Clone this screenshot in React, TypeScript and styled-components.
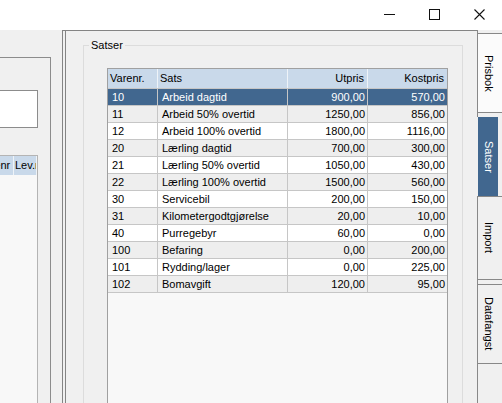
import styled, { createGlobalStyle } from 'styled-components'

const GlobalStyle = createGlobalStyle`
  html, body {
    margin: 0;
    padding: 0;
    background: #f0f0f0;
  }
`

type Rate = { nr: string; name: string; sale: string; cost: string }

const rates: Rate[] = [
  { nr: '10', name: 'Arbeid dagtid', sale: '900,00', cost: '570,00' },
  { nr: '11', name: 'Arbeid 50% overtid', sale: '1250,00', cost: '856,00' },
  { nr: '12', name: 'Arbeid 100% overtid', sale: '1800,00', cost: '1116,00' },
  { nr: '20', name: 'Lærling dagtid', sale: '700,00', cost: '300,00' },
  { nr: '21', name: 'Lærling 50% overtid', sale: '1050,00', cost: '430,00' },
  { nr: '22', name: 'Lærling 100% overtid', sale: '1500,00', cost: '560,00' },
  { nr: '30', name: 'Servicebil', sale: '200,00', cost: '150,00' },
  { nr: '31', name: 'Kilometergodtgjørelse', sale: '20,00', cost: '10,00' },
  { nr: '40', name: 'Purregebyr', sale: '60,00', cost: '0,00' },
  { nr: '100', name: 'Befaring', sale: '0,00', cost: '200,00' },
  { nr: '101', name: 'Rydding/lager', sale: '0,00', cost: '225,00' },
  { nr: '102', name: 'Bomavgift', sale: '120,00', cost: '95,00' },
]

const Window = styled.div`
  width: 502px;
  height: 403px;
  overflow: hidden;
  display: flex;
  flex-direction: column;
  background: #f0f0f0;
  font-family: 'Liberation Sans', Arial, sans-serif;
  font-size: 11px;
  color: #000;
`

const TitleBar = styled.div`
  height: 30px;
  flex-shrink: 0;
  background: #fff;
  display: flex;
  justify-content: flex-end;
`

const CaptionButton = styled.div`
  width: 45px;
  height: 30px;
  display: flex;
  justify-content: center;
  align-items: flex-start;
  padding-top: 9px;
  box-sizing: border-box;
`

const Body = styled.div`
  flex: 1;
  min-height: 0;
  display: flex;
`

/* left side: partly hidden search panel */
const LeftPane = styled.div`
  width: 62px;
  flex-shrink: 0;
  overflow: hidden;
  display: flex;
  flex-direction: column;
`

const SidePanel = styled.div`
  margin-top: 27px;
  margin-left: -30px;
  width: 81px;
  flex: 1;
  box-sizing: border-box;
  border-top: 1px solid #8c8c8c;
  border-right: 1px solid #8c8c8c;
  padding-right: 12px;
  display: flex;
  flex-direction: column;
`

const SearchBox = styled.div`
  margin-top: 32px;
  height: 38px;
  box-sizing: border-box;
  border: 1px solid #8c8c8c;
  background: #fff;
`

const SupplierGrid = styled.div`
  margin-top: 27px;
  margin-left: auto;
  width: 62px;
  flex: 1;
  box-sizing: border-box;
  border: 1px solid #b4b4b4;
  border-bottom: none;
  background: #f8f8f8;
  overflow: hidden;
`

const SupplierHeader = styled.div`
  display: grid;
  grid-template-columns: 37px 1fr;
  height: 19px;
  background: #c9d9ea;
`

const SupplierHeadCell = styled.div`
  padding-left: 1px;
  line-height: 19px;
  white-space: nowrap;
  overflow: hidden;
  border-right: 1px solid #eef3f8;
`

const Splitter = styled.div`
  width: 3px;
  flex-shrink: 0;
  box-sizing: border-box;
  border-left: 1px solid #848484;
  border-top: 1px solid #848484;
`

/* tab page with the rate group */
const TabPage = styled.div`
  width: 412px;
  flex-shrink: 0;
  box-sizing: border-box;
  border-left: 1px solid #848484;
  border-top: 1px solid #848484;
  overflow: hidden;
  display: flex;
  flex-direction: column;
`

const GroupBox = styled.div`
  margin: 14px 14px 0 17px;
  min-height: 420px;
  border: 1px solid #dcdcdc;
  padding: 0 14px 0 23px;
  display: flex;
  flex-direction: column;
`

const GroupCaption = styled.div`
  align-self: flex-start;
  margin: -7px 0 0 -18px;
  padding: 0 2px;
  line-height: 13px;
  background: #f0f0f0;
`

const RateGrid = styled.div`
  margin-top: 16px;
  width: 341px;
  min-height: 400px;
  box-sizing: border-box;
  border: 1px solid #a0a0a0;
  background: #f8f8f8;
`

const columns = '50px 130px 80px 79px'

const HeaderRow = styled.div`
  display: grid;
  grid-template-columns: ${columns};
  height: 20px;
  box-sizing: border-box;
  border-bottom: 1px solid #c6c6c6;
  background: #c9d9ea;
`

const HeadCell = styled.div<{ $right?: boolean; $last?: boolean }>`
  line-height: 19px;
  padding: ${(p) => (p.$right ? '0 3px 0 0' : '0 0 0 2px')};
  text-align: ${(p) => (p.$right ? 'right' : 'left')};
  border-right: ${(p) => (p.$last ? 'none' : '1px solid #eef3f8')};
  white-space: nowrap;
`

type Tone = 'selected' | 'shaded' | 'plain'

const rowBg: Record<Tone, string> = {
  selected: '#41678f',
  shaded: '#eeeeee',
  plain: '#ffffff',
}

const DataRow = styled.div<{ $tone: Tone }>`
  display: grid;
  grid-template-columns: ${columns};
  height: 17px;
  box-sizing: border-box;
  border-bottom: 1px solid #c6c6c6;
  background: ${(p) => rowBg[p.$tone]};
  color: ${(p) => (p.$tone === 'selected' ? '#fff' : '#000')};
`

const Cell = styled.div<{ $right?: boolean; $last?: boolean }>`
  line-height: 16px;
  padding: ${(p) => (p.$right ? '0 2px 0 0' : '0 0 0 4px')};
  text-align: ${(p) => (p.$right ? 'right' : 'left')};
  border-right: ${(p) => (p.$last ? 'none' : '1px solid #c6c6c6')};
  white-space: nowrap;
  overflow: hidden;
`

/* vertical tabs on the right edge */
const TabStrip = styled.div`
  width: 25px;
  flex-shrink: 0;
  display: flex;
  flex-direction: column;
`

const StripEdge = styled.div<{ $h?: number }>`
  border-left: 1px solid #888;
  height: ${(p) => (p.$h ? `${p.$h}px` : 'auto')};
  flex: ${(p) => (p.$h ? '0 0 auto' : '1')};
`

const SideTab = styled.div<{ $h: number; $active?: boolean; $bg?: string }>`
  height: ${(p) => p.$h}px;
  box-sizing: border-box;
  display: flex;
  align-items: center;
  justify-content: center;
  ${(p) =>
    p.$active
      ? `
    margin-left: 1px;
    width: 20px;
    background: #41678f;
    color: #fff;
  `
      : `
    border: 1px solid #888;
    border-right: none;
    padding-right: 4px;
    background: ${p.$bg ?? '#f0f0f0'};
  `}
`

const TabLabel = styled.span`
  writing-mode: vertical-rl;
  line-height: 13px;
  white-space: nowrap;
`

const App = () => {
  return (
    <Window>
      <GlobalStyle />
      <TitleBar>
        <CaptionButton>
          <svg width="11" height="11" viewBox="0 0 11 11">
            <line x1="0" y1="5.5" x2="11" y2="5.5" stroke="#111" strokeWidth="1" />
          </svg>
        </CaptionButton>
        <CaptionButton>
          <svg width="11" height="11" viewBox="0 0 11 11">
            <rect x="0.5" y="0.5" width="10" height="10" fill="none" stroke="#111" strokeWidth="1" />
          </svg>
        </CaptionButton>
        <CaptionButton>
          <svg width="11" height="11" viewBox="0 0 11 11">
            <path d="M0.5 0.5 L10.5 10.5 M10.5 0.5 L0.5 10.5" stroke="#111" strokeWidth="1.1" fill="none" />
          </svg>
        </CaptionButton>
      </TitleBar>

      <Body>
        <LeftPane>
          <SidePanel>
            <SearchBox />
            <SupplierGrid>
              <SupplierHeader>
                <SupplierHeadCell>Varenr</SupplierHeadCell>
                <SupplierHeadCell>Lev.nr</SupplierHeadCell>
              </SupplierHeader>
            </SupplierGrid>
          </SidePanel>
        </LeftPane>

        <Splitter />

        <TabPage>
          <GroupBox>
            <GroupCaption>Satser</GroupCaption>
            <RateGrid>
              <HeaderRow>
                <HeadCell>Varenr.</HeadCell>
                <HeadCell>Sats</HeadCell>
                <HeadCell $right>Utpris</HeadCell>
                <HeadCell $right $last>Kostpris</HeadCell>
              </HeaderRow>
              {rates.map((r, i) => (
                <DataRow key={r.nr} $tone={i === 0 ? 'selected' : i % 2 ? 'shaded' : 'plain'}>
                  <Cell>{r.nr}</Cell>
                  <Cell>{r.name}</Cell>
                  <Cell $right>{r.sale}</Cell>
                  <Cell $right $last>{r.cost}</Cell>
                </DataRow>
              ))}
            </RateGrid>
          </GroupBox>
        </TabPage>

        <TabStrip>
          <StripEdge $h={3} />
          <SideTab $h={80} $bg="#fbfbfb">
            <TabLabel>Prisbok</TabLabel>
          </SideTab>
          <StripEdge $h={4} />
          <SideTab $h={79} $active>
            <TabLabel>Satser</TabLabel>
          </SideTab>
          <SideTab $h={84}>
            <TabLabel>Import</TabLabel>
          </SideTab>
          <StripEdge $h={4} />
          <SideTab $h={80}>
            <TabLabel>Datafangst</TabLabel>
          </SideTab>
          <StripEdge />
        </TabStrip>
      </Body>
    </Window>
  )
}

export default App
